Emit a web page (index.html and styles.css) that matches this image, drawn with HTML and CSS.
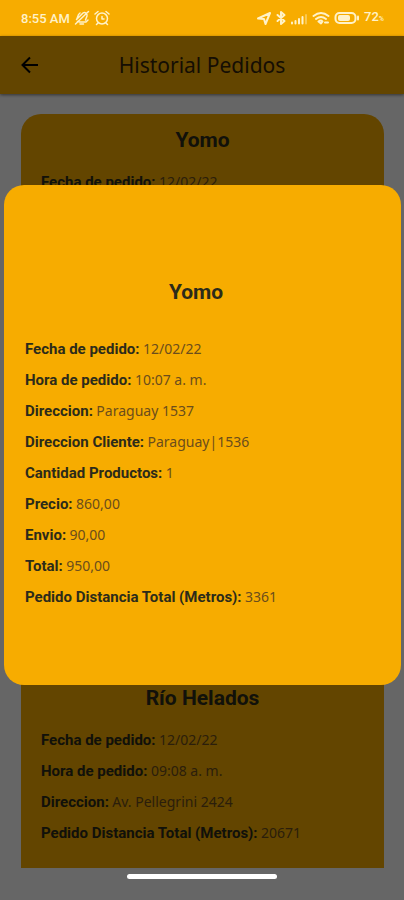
FILE: index.html
```html
<!DOCTYPE html>
<html lang="es">
<head>
<meta charset="utf-8">
<meta name="viewport" content="width=device-width, initial-scale=1">
<title>Historial Pedidos</title>
<link rel="stylesheet" href="styles.css">
</head>
<body>
<div class="screen">
  <div class="status">
    <div class="status-group">
      <span class="clock">8:55 AM</span>
      <svg class="glyph thin" viewBox="0 0 16 16" aria-hidden="true"><path d="M2.500 9.500L9 3c2-1.500 4.500.5 4 3l-1.500 4M3.500 11.500l2 .5h6.500l2-2M6 14h3.500M1.500 14L14.500 1.500M2.500 9.500C4 8 3 5 6 3"/></svg>
      <svg class="glyph thin alarm" viewBox="0 0 16 16" aria-hidden="true"><circle cx="8" cy="8.500" r="5.500"/><path d="M8 6.500v2.500h2M1 4l3-2.500M15 4l-3-2.500M4 13l-1.500 1.500M12 13l1.500 1.500"/></svg>
    </div>
    <div class="status-group">
      <svg class="glyph" viewBox="0 0 16 16" aria-hidden="true"><path d="M2 8.500L14 3 9.500 14 8 9z"/></svg>
      <svg class="glyph narrow" viewBox="0 0 10 16" aria-hidden="true"><path d="M1.500 5l7 6L5 14V2l3.500 3-7 6"/></svg>
      <svg class="glyph signal" viewBox="0 0 18 16" aria-hidden="true"><path d="M2 12.500v1M5.500 11v2.500M9 9v4.500M12.500 7v6.500"/><path class="faint" d="M16 5v8.500"/></svg>
      <svg class="glyph wifi" viewBox="0 0 18 16" aria-hidden="true"><path d="M1.500 6q7.500-6 15 0M4 9q5-4 10 0M6.500 11.500q2.500-2 4 0L9 13.500zM13 12.500h3"/></svg>
      <svg class="glyph battery" viewBox="0 0 26 16" aria-hidden="true"><rect x="1.500" y="3" width="20" height="10" rx="4"/><rect class="charge" x="5" y="6" width="10" height="4" rx="1"/><path d="M24 6.500v3"/></svg>
      <span class="level">72<small>%</small></span>
    </div>
  </div>

  <header class="topbar">
    <button class="back" type="button" aria-label="Volver">
      <svg viewBox="0 0 24 24" aria-hidden="true"><path d="M20 12H5M12 4.500L4.500 12l7.500 7.500"/></svg>
    </button>
    <h1>Historial Pedidos</h1>
  </header>

  <main class="orders">
    <article class="card card-first">
      <h2>Yomo</h2>
      <dl>
        <div><dt>Fecha de pedido:</dt> <dd>12/02/22</dd></div>
      </dl>
    </article>
    <article class="card">
      <h2>Río Helados</h2>
      <dl>
        <div><dt>Fecha de pedido:</dt> <dd>12/02/22</dd></div>
        <div><dt>Hora de pedido:</dt> <dd>09:08 a. m.</dd></div>
        <div><dt>Direccion:</dt> <dd>Av. Pellegrini 2424</dd></div>
        <div><dt>Pedido Distancia Total (Metros):</dt> <dd>20671</dd></div>
      </dl>
    </article>
  </main>

  <footer class="navbar"><span class="handle"></span></footer>

  <div class="scrim">
    <section class="dialog" role="dialog" aria-modal="true" aria-labelledby="dialog-title">
      <h2 id="dialog-title">Yomo</h2>
      <dl>
        <div><dt>Fecha de pedido:</dt> <dd>12/02/22</dd></div>
        <div><dt>Hora de pedido:</dt> <dd>10:07 a. m.</dd></div>
        <div><dt>Direccion:</dt> <dd>Paraguay 1537</dd></div>
        <div><dt>Direccion Cliente:</dt> <dd>Paraguay|1536</dd></div>
        <div><dt>Cantidad Productos:</dt> <dd>1</dd></div>
        <div><dt>Precio:</dt> <dd>860,00</dd></div>
        <div><dt>Envio:</dt> <dd>90,00</dd></div>
        <div><dt>Total:</dt> <dd>950,00</dd></div>
        <div><dt>Pedido Distancia Total (Metros):</dt> <dd>3361</dd></div>
      </dl>
    </section>
  </div>
</div>
</body>
</html>
```
FILE: styles.css
```css
:root {
  --amber: #f7ac00;
  --ink: #2c2b1a;
  --muted: #6b4d1c;
  --status-height: 36px;
}

* {
  box-sizing: border-box;
}

body {
  margin: 0;
  background: #fff;
  color: var(--ink);
  font-family: Roboto, "Noto Sans", sans-serif;
  font-size: 14px;
  line-height: 19px;
}

h1,
h2,
dl,
dd {
  margin: 0;
}

.screen {
  position: relative;
  display: flex;
  flex-direction: column;
  min-height: 100vh;
}

/* System status bar */
.status {
  display: flex;
  align-items: center;
  justify-content: space-between;
  height: var(--status-height);
  padding: 0 20px 0 21px;
  background: var(--amber);
  color: #fff2c9;
}

.status-group {
  display: flex;
  align-items: center;
  gap: 4px;
}

.clock,
.level {
  font-size: 13px;
  font-weight: 500;
}

.level small {
  font-size: 7px;
}

.glyph {
  width: 16px;
  height: 16px;
  fill: none;
  stroke: currentColor;
  stroke-width: 2;
  stroke-linecap: round;
  stroke-linejoin: round;
}

.thin {
  stroke-width: 1.5;
}

.narrow {
  width: 10px;
}

.signal,
.wifi {
  width: 18px;
}

.battery {
  width: 26px;
}

.charge {
  fill: currentColor;
}

.faint {
  opacity: 0.4;
}

/* App bar */
.topbar {
  display: grid;
  grid-template-columns: 24px 1fr 24px;
  align-items: center;
  height: 58px;
  padding: 0 18px;
  background: var(--amber);
  box-shadow: 0 1px 3px rgba(0, 0, 0, 0.5);
}

.topbar h1 {
  color: #35250a;
  font: 400 21px/28px "Noto Sans", sans-serif;
  text-align: center;
}

.back {
  width: 24px;
  height: 24px;
  padding: 0;
  border: 0;
  background: none;
  color: #000;
}

.back svg {
  display: block;
  width: 24px;
  height: 24px;
  fill: none;
  stroke: currentColor;
  stroke-width: 2;
}

/* Order list */
.orders {
  display: flex;
  flex: 1;
  flex-direction: column;
  gap: 20px;
  padding: 20px 20px 0 21px;
}

.card {
  padding: 14px 20px 26px;
  background: var(--amber);
}

.card-first {
  flex: 1;
  border-radius: 20px;
}

h2 {
  font-size: 21px;
  font-weight: 700;
  line-height: 24px;
  text-align: center;
}

dl {
  display: grid;
  grid-auto-rows: 19px;
  gap: 12px;
}

.card dl {
  margin-top: 20px;
}

dt,
dd {
  display: inline;
}

dt {
  font-size: 15px;
  font-weight: 700;
}

dd {
  color: var(--muted);
  font-family: "Noto Sans", sans-serif;
}

.navbar {
  display: flex;
  justify-content: center;
  height: 32px;
  padding-top: 6px;
}

.handle {
  z-index: 2;
  width: 150px;
  height: 5px;
  border-radius: 3px;
  background: #fff;
}

/* Order detail dialog */
.scrim {
  position: absolute;
  inset: var(--status-height) 0 0;
  z-index: 1;
  display: flex;
  align-items: center;
  padding: 0 3px 66px 4px;
  background: rgba(0, 0, 0, 0.6);
}

.dialog {
  flex: 1;
  padding: 95px 34px 79px 21px;
  border-radius: 20px;
  background: var(--amber);
}

.dialog dl {
  margin-top: 35px;
}
```
